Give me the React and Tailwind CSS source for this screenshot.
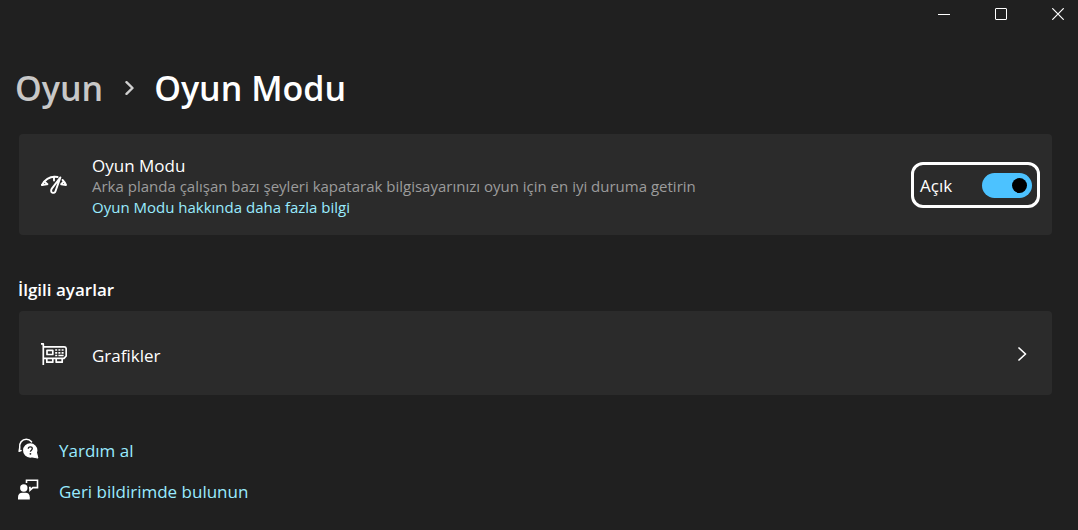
import React, { useState } from 'react'

const MinimizeIcon = () => (
  <svg className="size-3" viewBox="0 0 12 12" fill="none" stroke="#fff" aria-hidden="true">
    <path d="M0 6.5h12" />
  </svg>
)

const MaximizeIcon = () => (
  <svg className="size-3" viewBox="0 0 12 12" fill="none" stroke="#fff" aria-hidden="true">
    <rect x="0.5" y="0.5" width="11" height="11" rx="0.5" />
  </svg>
)

const CloseIcon = () => (
  <svg className="size-3" viewBox="0 0 12 12" fill="none" stroke="#fff" strokeWidth="1.2" aria-hidden="true">
    <path d="M0.3 0.3l11.4 11.4M11.7 0.3L0.3 11.7" />
  </svg>
)

const GaugeIcon = () => (
  <svg className="h-5 w-[26px]" viewBox="0 0 26 20" fill="none" stroke="#fff" strokeWidth="1.9" strokeLinecap="round" strokeLinejoin="round" aria-hidden="true">
    <path d="M1 10C4 4.4 9.6 1 16.6 2" />
    <path d="M1 10l4.6-0.6M3.6 6.6l2.8 2.6M13 1.800v3.800" />
    <path d="M19.400 2.400L10.800 13.600c-1.100 1.600-0.800 3.500 0.500 4.100 1.400 0.600 2.800-0.100 3.300-1.800L19.400 2.400z" />
    <path d="M21.600 5c1.400 1.300 2.500 3 3.400 5l-4.600-0.600M22.600 6.600l-2.400 2.600" />
  </svg>
)

const GraphicsIcon = () => (
  <svg className="h-[22px] w-[26px]" viewBox="0 0 26 22" fill="none" stroke="#fff" strokeWidth="1.7" strokeLinejoin="round" aria-hidden="true">
    <path d="M0 0.900h2.300v21.100" />
    <path d="M2.300 3.900h20.900q2 0 2 2v7.100l-2.200 2.300h-20.700" />
    <path d="M6 7.300h5.800v4.200h-5.800z" />
    <path d="M5.800 15.500v3.700h6v-3.700M15.200 15.500v3.700h6v-3.700" />
    <path d="M14.200 7h2M17.400 7h2M20.600 7h2M14.200 9.800h2M17.400 9.800h2M20.600 9.800h2M14.200 12.500h2M17.400 12.500h5.200" />
  </svg>
)

const HelpIcon = () => (
  <svg className="h-[22px] w-[21px]" viewBox="0 0 21 22" fill="none" aria-hidden="true">
    <path d="M3 12.600L1.200 13.200 1.700 10C0.800 5 4.200 1.200 8.300 1.200c2.200 0 4 1 5.200 2.600" stroke="#fff" strokeWidth="1.600" strokeLinecap="round" strokeLinejoin="round" />
    <path d="M12.300 5.300a7.200 7.200 0 1 1-0.100 14.400 7.200 7.200 0 0 1 0.100-14.400z" fill="#fff" />
    <path d="M18.500 14.500l1.400 5.600-5.600-1.200z" fill="#fff" stroke="#fff" strokeLinejoin="round" />
    <path d="M10.300 10.800c0-1.300 0.800-2 2-2s2 0.800 2 1.800c0 1.500-1.900 1.600-1.900 3.200" stroke="#202020" strokeWidth="1.300" />
    <circle cx="12.400" cy="15.800" r="0.900" fill="#202020" />
  </svg>
)

const FeedbackIcon = () => (
  <svg className="h-[22px] w-[21px]" viewBox="0 0 21 22" fill="none" aria-hidden="true">
    <circle cx="5.800" cy="9" r="3.700" fill="#fff" />
    <path d="M0 20.500v-2.300c0-3 1.900-4.400 4.200-4.400h3.400c2.300 0 4.200 1.400 4.200 4.400v2.300z" fill="#fff" />
    <path d="M8.500 4V1.200h11v7.400h-4.600l-2.900 2.600V8.600h-1" stroke="#fff" strokeWidth="1.600" />
  </svg>
)

const links = [
  { label: 'Yardım al', Icon: HelpIcon },
  { label: 'Geri bildirimde bulunun', Icon: FeedbackIcon },
]

function App() {
  const [gameMode, setGameMode] = useState(true)

  return (
    <div className="min-h-screen bg-[#202020] font-['Open_Sans','Noto_Sans',sans-serif] text-white">
      <header className="flex justify-end gap-[45px] pt-2 pr-[14px]">
        <button type="button" aria-label="Simge durumuna küçült"><MinimizeIcon /></button>
        <button type="button" aria-label="Ekranı kapla"><MaximizeIcon /></button>
        <button type="button" aria-label="Kapat"><CloseIcon /></button>
      </header>

      <main className="pt-11 pr-[26px] pl-[19px]">
        <nav className="-ml-1 flex h-12 items-center text-[34px] leading-12 font-semibold" aria-label="İçerik haritası">
          <a href="#oyun" className="text-[#c8c8c8]">Oyun</a>
          <svg className="mr-5 ml-[22px] h-[14px] w-[9px]" viewBox="0 0 9 14" fill="none" stroke="#d0d0d0" strokeWidth="2.4" strokeLinecap="round" strokeLinejoin="round" aria-hidden="true">
            <path d="M1.500 1.200l6 5.800-6 5.800" />
          </svg>
          <h1>Oyun Modu</h1>
        </nav>

        <section className="mt-[22px] flex min-h-[101px] items-center rounded bg-[#2b2b2b] pr-3 pl-[22px]">
          <GaugeIcon />
          <div className="ml-[25px] flex-1 pt-1">
            <h2 id="game-mode" className="text-[17px] leading-[21px]">Oyun Modu</h2>
            <p className="text-[15px] leading-[21px] text-[#9c9c9c]">
              Arka planda çalışan bazı şeyleri kapatarak bilgisayarınızı oyun için en iyi duruma getirin
            </p>
            <a href="#bilgi" className="block text-[15px] leading-[21px] text-[#99ebff]">Oyun Modu hakkında daha fazla bilgi</a>
          </div>
          <label className="flex h-[46px] w-[129px] items-center justify-between rounded-xl border-[3px] border-white pt-0.5 pr-[5px] pl-[6px]">
            <span className="text-[17px]">{gameMode ? 'Açık' : 'Kapalı'}</span>
            <input
              type="checkbox"
              role="switch"
              aria-labelledby="game-mode"
              checked={gameMode}
              onChange={(e) => setGameMode(e.target.checked)}
              className="peer sr-only"
            />
            <span className="flex h-[25px] w-[50px] items-center rounded-full bg-[#9c9c9c] px-[5px] peer-checked:justify-end peer-checked:bg-[#4cc2ff]">
              <span className="size-[15px] rounded-full bg-black" />
            </span>
          </label>
        </section>

        <h2 className="mt-[43px] -ml-px text-[17px] leading-6 font-semibold">İlgili ayarlar</h2>
        <a href="#grafikler" className="mt-[9px] flex min-h-[84px] items-center rounded bg-[#2b2b2b] pt-0.5 pr-[25px] pl-[22px]">
          <GraphicsIcon />
          <span className="ml-[25px] flex-1 pt-1 text-[17px]">Grafikler</span>
          <svg className="h-[14px] w-[9px]" viewBox="0 0 9 14" fill="none" stroke="#fff" strokeWidth="1.700" strokeLinecap="round" strokeLinejoin="round" aria-hidden="true">
            <path d="M1 1l6.500 6L1 13" />
          </svg>
        </a>

        <ul className="mt-[42px] -ml-px space-y-[17px]">
          {links.map(({ label, Icon }) => (
            <li key={label}>
              <a href="#destek" className="flex h-6 items-center gap-5 text-[17px] text-[#99ebff]">
                <Icon />
                <span className="pt-1">{label}</span>
              </a>
            </li>
          ))}
        </ul>
      </main>
    </div>
  )
}

export default App
